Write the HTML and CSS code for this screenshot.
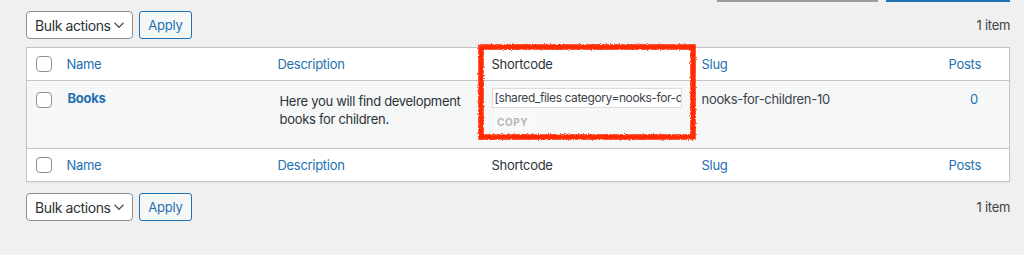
FILE: index.html
```html
<!DOCTYPE html>
<html lang="en">
<head>
    <meta charset="UTF-8">
    <meta name="viewport" content="width=device-width, initial-scale=1.0">
    <title>Tags</title>
    <link rel="stylesheet" href="styles.css">
</head>
<body>

    <div class="search-box">
        <span class="search-input"></span>
        <span class="search-button"></span>
    </div>

    <div class="tablenav top">
        <div class="bulk">
            <div class="select">Bulk actions
                <svg width="12" height="8" viewBox="0 0 12 8"><path d="M1.5 1.8 6 6.2 10.5 1.8" fill="none" stroke="#50575e" stroke-width="1.4"/></svg>
            </div>
            <button type="button">Apply</button>
        </div>
        <span class="count">1 item</span>
    </div>

    <div class="table-wrap">
        <table class="list">
            <colgroup>
                <col class="c-check">
                <col class="c-name">
                <col class="c-desc">
                <col class="c-code">
                <col class="c-slug">
                <col class="c-posts">
            </colgroup>
            <thead>
                <tr>
                    <td class="check"><span class="box"></span></td>
                    <th class="link">Name</th>
                    <th class="link">Description</th>
                    <th>Shortcode</th>
                    <th class="link">Slug</th>
                    <th class="link posts">Posts</th>
                </tr>
            </thead>
            <tbody>
                <tr>
                    <td class="check"><span class="box"></span></td>
                    <td class="name"><a href="#">Books</a></td>
                    <td class="desc">Here you will find development books for children.</td>
                    <td class="code">
                        <div class="code-input">[shared_files category=nooks-for-children-10]</div>
                        <div class="copy">COPY</div>
                    </td>
                    <td class="slug">nooks-for-children-10</td>
                    <td class="posts"><a href="#">0</a></td>
                </tr>
            </tbody>
            <tfoot>
                <tr>
                    <td class="check"><span class="box"></span></td>
                    <th class="link">Name</th>
                    <th class="link">Description</th>
                    <th>Shortcode</th>
                    <th class="link">Slug</th>
                    <th class="link posts">Posts</th>
                </tr>
            </tfoot>
        </table>

        <svg class="marker" width="223" height="101" viewBox="0 0 223 101">
            <defs>
                <filter id="rough">
                    <feTurbulence type="fractalNoise" baseFrequency="0.9" numOctaves="2" seed="3"/>
                    <feDisplacementMap in="SourceGraphic" scale="3"/>
                </filter>
            </defs>
            <rect x="5" y="5" width="212" height="90" fill="none" stroke="#ff2a00" stroke-width="5.5" filter="url(#rough)"/>
        </svg>
    </div>

    <div class="tablenav bottom">
        <div class="bulk">
            <div class="select">Bulk actions
                <svg width="12" height="8" viewBox="0 0 12 8"><path d="M1.5 1.8 6 6.2 10.5 1.8" fill="none" stroke="#50575e" stroke-width="1.4"/></svg>
            </div>
            <button type="button">Apply</button>
        </div>
        <span class="count">1 item</span>
    </div>

</body>
</html>
```

FILE: styles.css
```css
body {
    margin: 0;
    padding: 0 14px 0 26px;
    background: #f0f0f1;
    color: #2c3338;
    font-family: Inter, "Noto Sans", sans-serif;
    font-size: 13px;
    letter-spacing: -0.3px;
}

.search-box {
    display: flex;
    justify-content: flex-end;
    gap: 8px;
    height: 2px;
}

.search-input {
    width: 161px;
    border-bottom: 2px solid #9a9ca0;
}

.search-button {
    width: 124px;
    border-bottom: 2px solid #2271b1;
}

.tablenav {
    display: flex;
    justify-content: space-between;
    align-items: center;
}

.tablenav.top {
    margin-top: 9px;
    height: 28px;
}

.tablenav.bottom {
    margin-top: 11px;
    height: 28px;
}

.bulk {
    display: flex;
    gap: 6px;
}

.select {
    box-sizing: border-box;
    width: 107px;
    height: 28px;
    padding: 0 7px 0 8px;
    display: flex;
    align-items: center;
    justify-content: space-between;
    background: #fff;
    border: 1px solid #8c8f94;
    border-radius: 4px;
    font-size: 14px;
    letter-spacing: -0.4px;
    white-space: nowrap;
    color: #2c3338;
}

button {
    box-sizing: border-box;
    width: 53px;
    height: 28px;
    padding: 0;
    background: #f6f7f7;
    color: #2271b1;
    border: 1px solid #2271b1;
    border-radius: 3px;
    font-family: inherit;
    font-size: 13px;
    letter-spacing: -0.2px;
}

.count {
    font-size: 13px;
    color: #3c434a;
}

.table-wrap {
    position: relative;
    margin-top: 8px;
}

.list {
    width: 100%;
    table-layout: fixed;
    border-collapse: collapse;
    background: #fff;
    border: 1px solid #c3c4c7;
    box-shadow: 0 1px 1px rgba(0, 0, 0, 0.04);
}

.c-check { width: 30px; }
.c-name { width: 211px; }
.c-desc { width: 214px; }
.c-code { width: 210px; }
.c-slug { width: 246px; }
.c-posts { width: 72px; }

th, td {
    text-align: left;
    font-weight: normal;
    vertical-align: top;
    padding: 0 10px;
}

thead tr, tfoot tr {
    height: 33px;
}

thead th, tfoot th {
    vertical-align: middle;
    font-size: 13px;
    color: #2c3338;
}

thead tr {
    border-bottom: 1px solid #c3c4c7;
}

tfoot tr {
    border-top: 1px solid #c3c4c7;
}

th.link {
    color: #2271b1;
}

th.posts {
    text-align: right;
    padding-right: 28px;
}

.check {
    padding: 0 0 0 9px;
    vertical-align: middle;
}

tbody tr {
    height: 68px;
    background: #f6f7f7;
}

tbody .check {
    vertical-align: top;
    padding-top: 11px;
}

.box {
    display: block;
    box-sizing: border-box;
    width: 16px;
    height: 16px;
    background: #fff;
    border: 1px solid #8c8f94;
    border-radius: 4px;
}

a {
    color: #2271b1;
    text-decoration: none;
}

.name {
    padding-top: 9px;
    padding-left: 11px;
    font-size: 13px;
    font-weight: 700;
}

.desc {
    padding-top: 11px;
    padding-left: 12px;
    font-size: 13px;
    line-height: 18px;
    color: #2c3338;
}

.code {
    padding-top: 7px;
}

.code-input {
    box-sizing: border-box;
    height: 20px;
    padding: 0 2px;
    background: #fff;
    border: 1px solid #dcdcde;
    font-size: 12px;
    letter-spacing: -0.4px;
    line-height: 18px;
    white-space: nowrap;
    overflow: hidden;
    color: #3c434a;
}

.copy {
    display: inline-block;
    margin-top: 4px;
    width: 42px;
    height: 20px;
    line-height: 20px;
    text-align: center;
    background: #f9f9f9;
    border-radius: 2px;
    font-size: 10px;
    font-weight: 700;
    letter-spacing: 0.5px;
    color: #b4b6b9;
}

.slug {
    padding-top: 10px;
    font-size: 13px;
    color: #3c434a;
}

td.posts {
    padding-top: 10px;
    padding-right: 31px;
    text-align: right;
    font-size: 13px;
}

.marker {
    position: absolute;
    left: 450px;
    top: -5px;
}
```
